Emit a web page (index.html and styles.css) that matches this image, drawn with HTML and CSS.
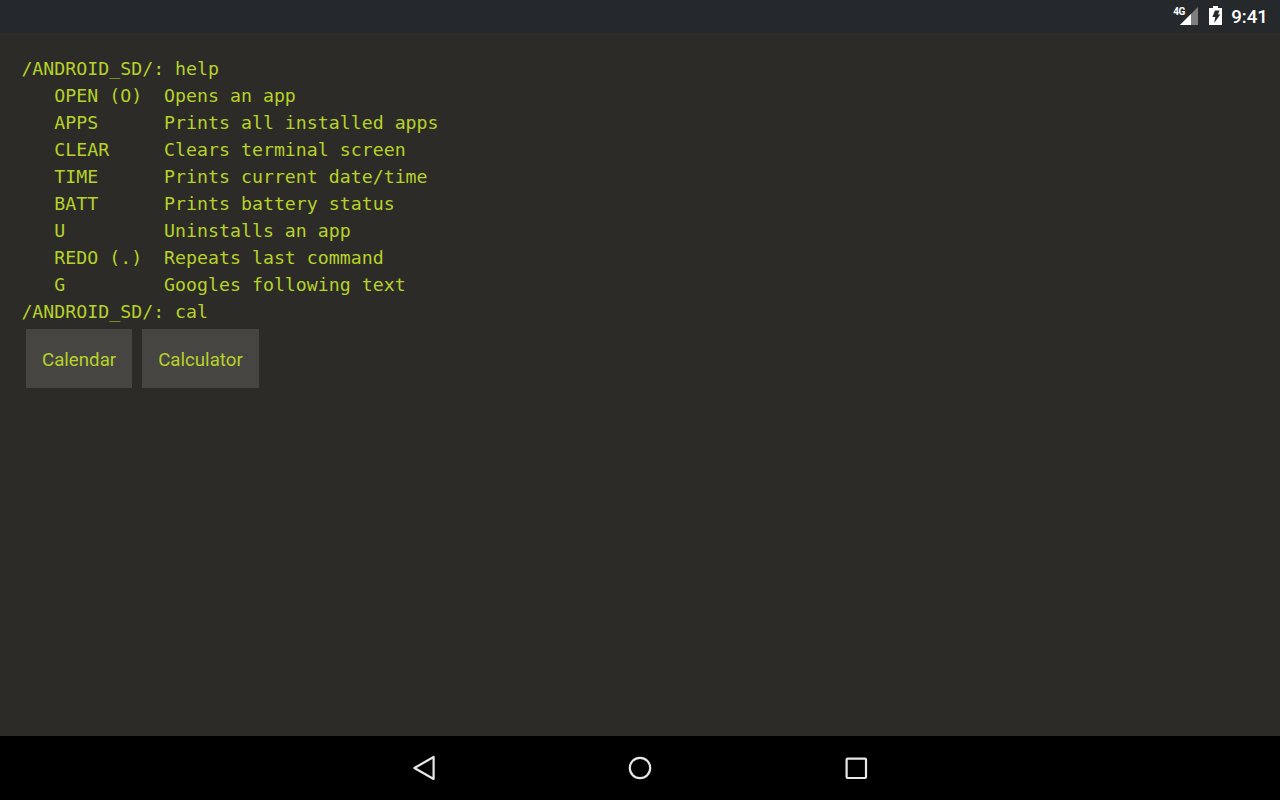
FILE: index.html
```html
<!DOCTYPE html>
<html lang="en">
<head>
<meta charset="utf-8">
<title>Terminal launcher</title>
<link rel="stylesheet" href="styles.css">
</head>
<body>
<div class="screen">
  <header class="status">
    <span class="net">4G</span>
    <svg class="signal" width="18" height="18" viewBox="0 0 18 18"><path d="M18 0V18H0Z" fill="#fff" fill-opacity=".4"/><path d="M11 7V18H0Z" fill="#fff"/></svg>
    <svg class="batt" width="13" height="19" viewBox="0 0 13 19"><path fill-rule="evenodd" d="M4 0H9V2H13V19H0V2H4ZM6 4.5H10.5L9 8.5H11.3L5.2 17L6.3 11H3.4Z" fill="#fff"/></svg>
    <span class="clock">9:41</span>
  </header>
  <main class="term">
<pre class="out">/ANDROID_SD/: help
   OPEN (O)  Opens an app
   APPS      Prints all installed apps
   CLEAR     Clears terminal screen
   TIME      Prints current date/time
   BATT      Prints battery status
   U         Uninstalls an app
   REDO (.)  Repeats last command
   G         Googles following text
/ANDROID_SD/: cal</pre>
    <div class="apps">
      <button class="app">Calendar</button>
      <button class="app">Calculator</button>
    </div>
  </main>
  <nav class="nav">
    <svg width="24" height="26" viewBox="0 0 24 26"><path d="M21.6 2V24L2.4 13Z" fill="none" stroke="#e8e8e8" stroke-width="2.2" stroke-linejoin="round"/></svg>
    <svg width="24" height="24" viewBox="0 0 24 24"><circle cx="12" cy="12" r="10.2" fill="none" stroke="#e8e8e8" stroke-width="2.2"/></svg>
    <svg width="24" height="24" viewBox="0 0 24 24"><rect x="2.6" y="2.6" width="19.4" height="19.4" rx="1" fill="none" stroke="#e8e8e8" stroke-width="2.2"/></svg>
  </nav>
</div>
</body>
</html>
```
FILE: styles.css
```css
* { box-sizing: border-box; }
html, body { margin: 0; height: 100%; }
.screen {
  width: 1280px;
  height: 800px;
  display: flex;
  flex-direction: column;
  background: #2c2b28;
  overflow: hidden;
}
.status {
  height: 33px;
  flex: none;
  background: #25292b;
  display: flex;
  align-items: flex-start;
  justify-content: flex-end;
  padding-right: 12px;
  color: #fff;
  font-family: Roboto, sans-serif;
}
.net {
  font-size: 10px;
  line-height: 12px;
  font-weight: 700;
  letter-spacing: -0.4px;
  margin: 6px -5.4px 0 0;
  position: relative;
  z-index: 1;
}
.signal { margin: 7px 11px 0 0; }
.batt { margin: 6px 9.6px 0 0; }
.clock { font-size: 18.7px; line-height: 22px; font-weight: 500; margin-top: 6px; }
.term {
  flex: 1;
  padding: 22px 0 0 21.4px;
}
.out {
  margin: 0;
  font-family: "DejaVu Sans Mono", monospace;
  font-size: 18.24px;
  line-height: 27px;
  color: #b6d22a;
}
.apps {
  display: flex;
  gap: 10px;
  margin: 4px 0 0 4.6px;
}
.app {
  height: 59px;
  padding: 2px 16px 0;
  border: 0;
  border-radius: 0;
  background: #464541;
  color: #b6d22a;
  font-family: Roboto, sans-serif;
  font-size: 18.7px;
}
.nav {
  height: 64px;
  flex: none;
  background: #000;
  display: flex;
  align-items: center;
  justify-content: center;
  gap: 192px;
}
```
